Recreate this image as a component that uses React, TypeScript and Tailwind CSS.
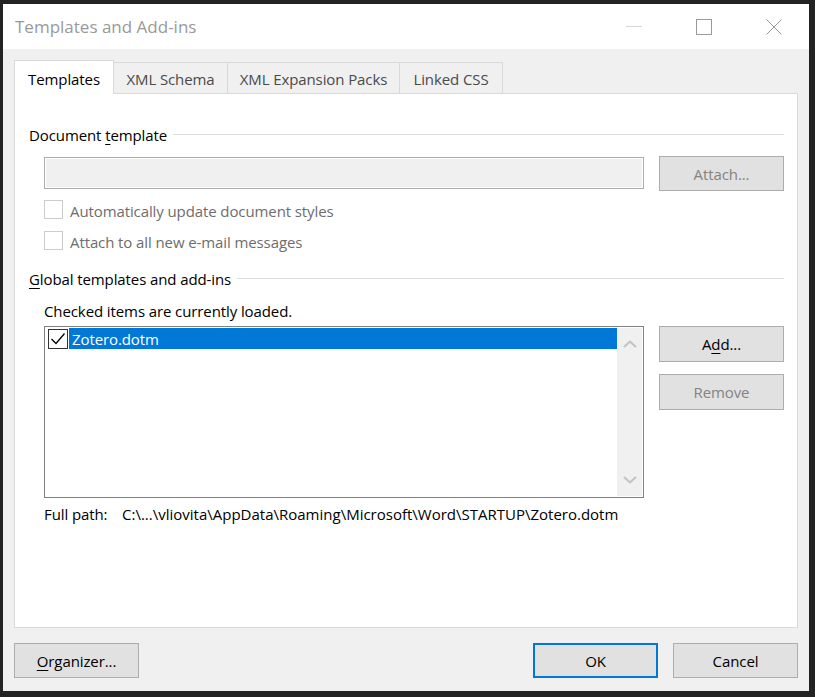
function Check({ disabled }: { disabled?: boolean }) {
  return (
    <div
      className={
        disabled
          ? "w-[19px] h-[19px] border border-[#cccccc] bg-white shrink-0"
          : "w-[19px] h-[19px] border border-[#333333] bg-white shrink-0"
      }
    />
  );
}

function Button({
  children,
  disabled,
  primary,
  className,
}: {
  children: React.ReactNode;
  disabled?: boolean;
  primary?: boolean;
  className?: string;
}) {
  return (
    <div
      className={[
        "flex items-center justify-center bg-[#e1e1e1] text-[15px] leading-[20px]",
        primary ? "border-2 border-[#0078d7]" : "border border-[#adadad]",
        disabled ? "text-[#838383]" : "text-black",
        className ?? "",
      ].join(" ")}
    >
      {children}
    </div>
  );
}

function GroupLabel({ children }: { children: React.ReactNode }) {
  return (
    <div className="flex items-center gap-[6px] h-[20px]">
      <span className="whitespace-nowrap">{children}</span>
      <div className="flex-1 h-px bg-[#dcdcdc] mt-[-1px]" />
    </div>
  );
}

export default function App() {
  return (
    <div className="w-[815px] h-[697px] bg-[#232323] pt-[4px] pl-[3px] pr-[6px] pb-[6px] font-['Open_Sans',sans-serif] tracking-[-0.1px] text-[15px] leading-[20px] text-black">
      <div className="w-full h-full flex flex-col">
        {/* title bar */}
        <div className="h-[45px] bg-white flex items-center justify-between">
          <span className="pl-[12px] text-[17px] text-[#999999] tracking-normal">Templates and Add-ins</span>
          <div className="flex h-full">
            <div className="w-[70px] h-full flex items-center justify-center">
              <svg width="16" height="16" viewBox="0 0 16 16">
                <line x1="0" y1="7.5" x2="16" y2="7.5" stroke="#d6d6d6" strokeWidth="1" />
              </svg>
            </div>
            <div className="w-[70px] h-full flex items-center justify-center">
              <svg width="16" height="16" viewBox="0 0 16 16">
                <rect x="0.5" y="0.5" width="15" height="15" fill="none" stroke="#9a9a9a" strokeWidth="1" />
              </svg>
            </div>
            <div className="w-[70px] h-full flex items-center justify-center">
              <svg width="16" height="16" viewBox="0 0 16 16">
                <path d="M0.5 0.5 L15.5 15.5 M15.5 0.5 L0.5 15.5" stroke="#9a9a9a" strokeWidth="1" />
              </svg>
            </div>
          </div>
        </div>

        {/* body */}
        <div className="flex-1 flex flex-col bg-[#f0f0f0] px-[11px] pt-[11px] pb-[13px]">
          {/* tabs */}
          <div className="h-[33px] flex items-end relative z-10">
            <div className="w-[100px] h-[34px] mb-[-1px] bg-white border-l border-t border-r border-[#d9d9d9] flex items-center justify-center pt-[2px]">
              Templates
            </div>
            <div className="w-[114px] h-[31px] border-t border-r border-[#d9d9d9] flex items-center justify-center pt-[2px] text-[#4a4a4a]">
              XML Schema
            </div>
            <div className="w-[172px] h-[31px] border-t border-r border-[#d9d9d9] flex items-center justify-center pt-[2px] text-[#4a4a4a]">
              XML Expansion Packs
            </div>
            <div className="w-[103px] h-[31px] border-t border-r border-[#d9d9d9] flex items-center justify-center pt-[2px] text-[#4a4a4a]">
              Linked CSS
            </div>
          </div>

          {/* panel */}
          <div className="flex-1 bg-white border border-[#d9d9d9] pl-[14px] pr-[13px] pt-[31px] flex flex-col">
            <GroupLabel>
              Document <span className="underline underline-offset-[3px]">t</span>emplate
            </GroupLabel>

            <div className="pl-[15px] flex flex-col">
              <div className="mt-[11px] flex items-start gap-[15px]">
                <div className="flex-1 mt-[1px] h-[32px] border border-[#adadad] bg-[#f0f0f0] shadow-[inset_0_0_0_1px_#ffffff]" />
                <Button disabled className="w-[125px] h-[35px]">
                  Attach...
                </Button>
              </div>

              <div className="mt-[9px] flex items-center gap-[7px] h-[19px] text-[#6d6d6d]">
                <Check disabled />
                <span className="mt-[2px]">Automatically update document styles</span>
              </div>
              <div className="mt-[12px] flex items-center gap-[7px] h-[19px] text-[#6d6d6d]">
                <Check disabled />
                <span className="mt-[2px]">Attach to all new e-mail messages</span>
              </div>
            </div>

            <div className="mt-[19px]">
              <GroupLabel>
                <span className="underline underline-offset-[3px]">G</span>lobal templates and add-ins
              </GroupLabel>
            </div>

            <div className="pl-[15px] flex flex-col">
              <div className="mt-[12px] h-[20px]">Checked items are currently loaded.</div>

              <div className="mt-[5px] flex items-start gap-[15px]">
                <div className="flex-1 h-[172px] border border-[#828282] bg-white flex p-px">
                  <div className="flex-1 flex flex-col">
                    <div className="h-[21px] flex items-center pl-[2px]">
                      <div className="w-[20px] h-[20px] border border-[#333333] bg-white shrink-0 flex items-center justify-center">
                        <svg width="18" height="18" viewBox="0 0 18 18">
                          <path d="M2.5 9 L7 13.5 L15.5 3.5" fill="none" stroke="#000" strokeWidth="1.3" />
                        </svg>
                      </div>
                      <div className="flex-1 h-full ml-px bg-[#0078d7] text-white pl-[3px] flex items-center">
                        Zotero.dotm
                      </div>
                    </div>
                  </div>
                  <div className="w-[25px] bg-[#f0f0f0] flex flex-col items-center justify-between py-[12px]">
                    <svg width="14" height="8" viewBox="0 0 14 8">
                      <path d="M1 7 L7 1.5 L13 7" fill="none" stroke="#c2c2c2" strokeWidth="2" />
                    </svg>
                    <svg width="14" height="8" viewBox="0 0 14 8">
                      <path d="M1 1 L7 6.5 L13 1" fill="none" stroke="#c2c2c2" strokeWidth="2" />
                    </svg>
                  </div>
                </div>

                <div className="w-[125px] flex flex-col gap-[12px]">
                  <Button className="h-[36px]">
                    <span>
                      A<span className="underline underline-offset-[3px]">d</span>d...
                    </span>
                  </Button>
                  <Button disabled className="h-[36px]">
                    Remove
                  </Button>
                </div>
              </div>

              <div className="mt-[6px] h-[20px] flex">
                <span className="w-[78px]">Full path:</span>
                <span className="tracking-normal">C:\...\vliovita\AppData\Roaming\Microsoft\Word\STARTUP\Zotero.dotm</span>
              </div>
            </div>
          </div>

          {/* bottom buttons */}
          <div className="mt-[15px] h-[35px] flex">
            <Button className="w-[125px] h-[35px]">
              <span>
                <span className="underline underline-offset-[3px]">O</span>rganizer...
              </span>
            </Button>
            <div className="flex-1" />
            <Button primary className="w-[125px] h-[35px]">
              OK
            </Button>
            <Button className="w-[125px] h-[35px] ml-[15px]">
              Cancel
            </Button>
          </div>
        </div>
      </div>
    </div>
  );
}
